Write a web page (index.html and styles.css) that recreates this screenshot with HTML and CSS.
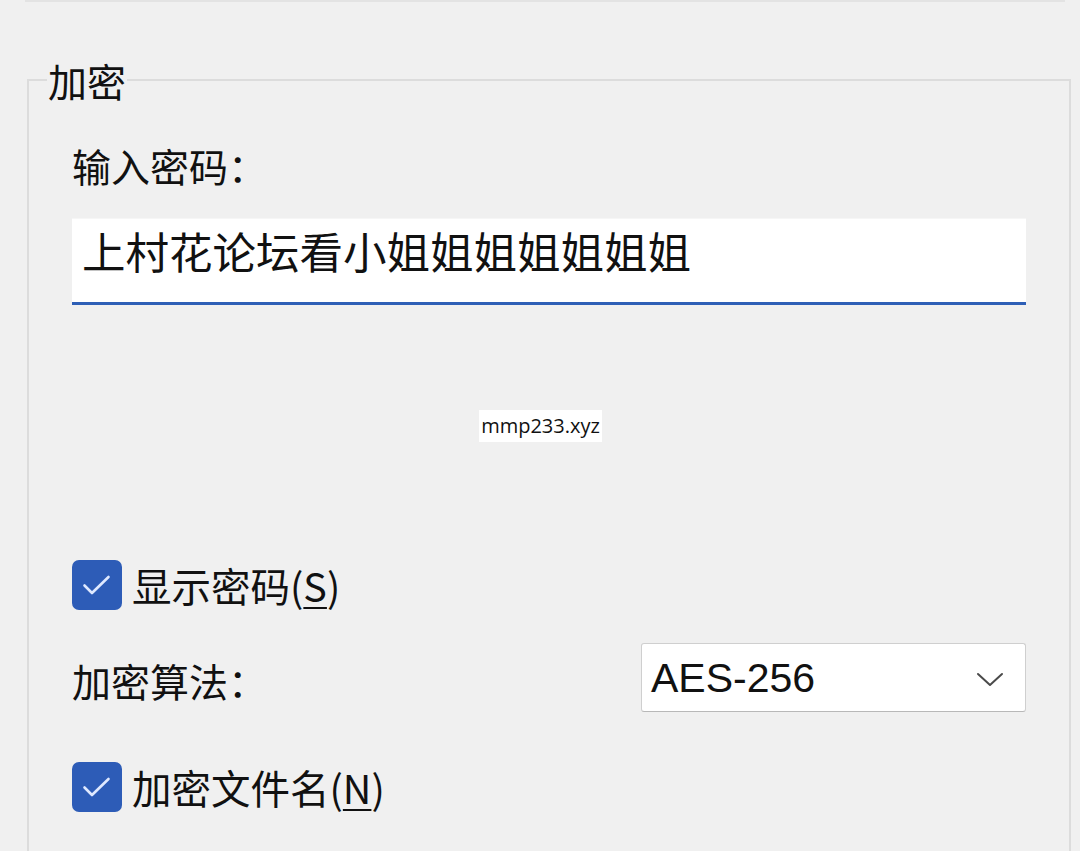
FILE: index.html
```html
<!DOCTYPE html>
<html lang="zh-CN">
<head>
<meta charset="utf-8">
<title>加密</title>
<link rel="stylesheet" href="styles.css">
</head>
<body>
<div class="topline"></div>
<fieldset class="group">
  <legend class="legend">加密</legend>
  <div class="label label-pwd">输入密码：</div>
  <div class="input">上村花论坛看小姐姐姐姐姐姐姐</div>
  <label class="check check-first">
    <span class="box"><svg width="50" height="50" viewBox="0 0 50 50"><path d="M12.5 25.5 L20 33 L36.5 17" fill="none" stroke="#dfe9ff" stroke-width="2.6" stroke-linecap="round" stroke-linejoin="round"/></svg></span>
    <span class="check-text">显示密码(<u>S</u>)</span>
  </label>
  <div class="algo-row">
    <span class="label">加密算法：</span>
    <div class="select">
      <span class="select-text">AES-256</span>
      <svg class="chev" width="28" height="16" viewBox="0 0 28 16"><path d="M2 3 L14 14 L26 3" fill="none" stroke="#4a4a4a" stroke-width="2" stroke-linecap="round" stroke-linejoin="round"/></svg>
    </div>
  </div>
  <label class="check check-second">
    <span class="box"><svg width="50" height="50" viewBox="0 0 50 50"><path d="M12.5 25.5 L20 33 L36.5 17" fill="none" stroke="#dfe9ff" stroke-width="2.6" stroke-linecap="round" stroke-linejoin="round"/></svg></span>
    <span class="check-text">加密文件名(<u>N</u>)</span>
  </label>
</fieldset>
<div class="watermark">mmp233.xyz</div>
</body>
</html>
```
FILE: styles.css
```css
html, body {
  margin: 0;
  padding: 0;
  background: #f0f0f0;
  overflow: hidden;
  height: 851px;
}
body {
  font-family: "Noto Sans CJK SC", "Noto Sans", sans-serif;
  color: #111;
  position: relative;
}
.topline {
  height: 2px;
  margin: 0 15px 0 25px;
  background: #e3e3e3;
}
.group {
  margin: 58px 9px 0 27px;
  padding: 0 0 0 43px;
  border: 2px solid #dcdcdc;
  border-bottom: none;
  height: 791px;
  box-sizing: border-box;
  min-width: 0;
}
.legend {
  font-size: 39px;
  line-height: 40px;
  padding: 0 1px;
  margin-left: -25px;
  color: #111;
}
.label {
  font-size: 39px;
  line-height: 46px;
  color: #111;
}
.label-pwd {
  margin-top: 42px;
}
.input {
  margin-top: 30px;
  width: 954px;
  height: 87px;
  box-sizing: border-box;
  background: #fff;
  border-bottom: 3px solid #2e5fb6;
  padding: 0 0 0 10px;
  font-size: 43.5px;
  line-height: 64px;
  color: #111;
  border-top: 1px solid #f6f6f6;
}
.check {
  display: flex;
  align-items: center;
  height: 50px;
}
.check-first {
  margin-top: 255px;
}
.check-second {
  margin-top: 50px;
}
.box {
  width: 50px;
  height: 50px;
  border-radius: 7px;
  background: #2d5cb7;
  display: block;
  flex: none;
}
.box svg {
  display: block;
}
.check-text {
  margin-left: 10px;
  font-size: 39.5px;
  line-height: 50px;
  color: #111;
}
.check-text u {
  text-underline-offset: 5px;
  text-decoration-thickness: 2px;
}
.algo-row {
  margin-top: 33px;
  width: 954px;
  height: 69px;
  display: flex;
  justify-content: space-between;
  align-items: center;
}
.algo-row .label {
  margin-top: 4px;
}
.select {
  width: 385px;
  height: 69px;
  box-sizing: border-box;
  background: #fff;
  border: 1px solid #cfcfcf;
  border-bottom-color: #b8b8b8;
  border-radius: 3px;
  display: flex;
  align-items: center;
  justify-content: space-between;
  padding: 0 21px 0 9px;
}
.select-text {
  font-family: "Liberation Sans", Arial, sans-serif;
  font-size: 41px;
  line-height: 50px;
  color: #111;
}
.chev {
  display: block;
  margin-top: 2px;
}
.watermark {
  position: absolute;
  left: 479px;
  top: 410px;
  width: 123px;
  height: 32px;
  background: #fff;
  font-family: "Open Sans", "Noto Sans", sans-serif;
  font-size: 20px;
  line-height: 32px;
  text-align: center;
  color: #111;
  white-space: nowrap;
}
```
